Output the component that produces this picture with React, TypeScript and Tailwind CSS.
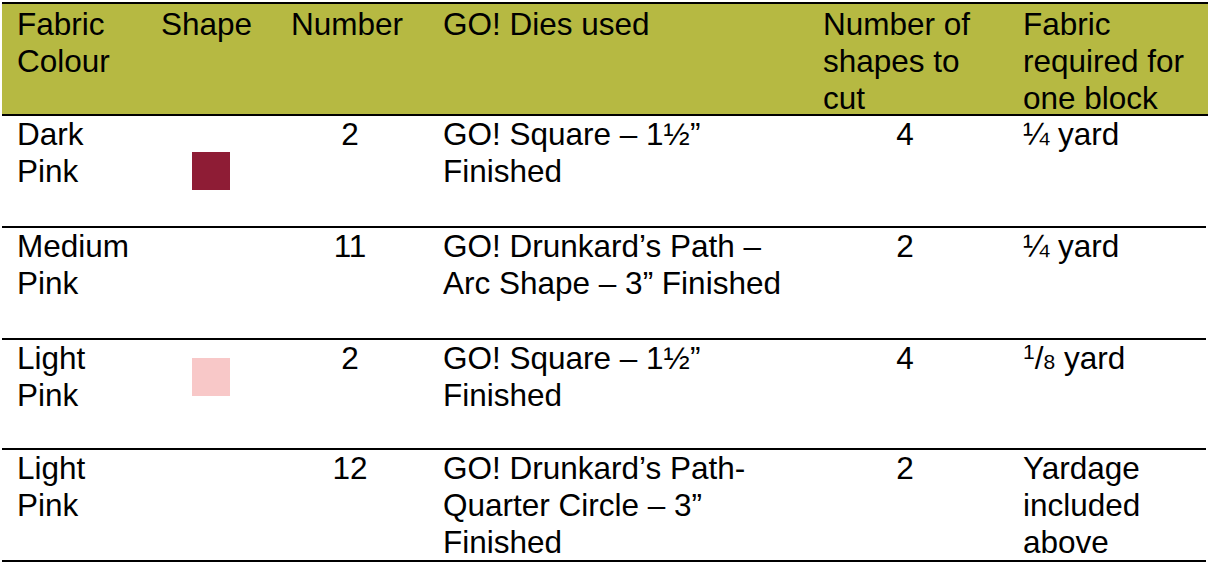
import React from "react";

/* Fabric cutting table for one quilt block */

const COLS = "grid grid-cols-[148px_130px_150px_380px_200px_196px]";

interface Row {
  colour: React.ReactNode;
  swatch?: { bg: string; offset: string };
  number: string;
  dies: React.ReactNode;
  shapes: string;
  fabric: React.ReactNode;
  height: string;
}

const ROWS: Row[] = [
  {
    colour: (
      <>
        Dark
        <br />
        Pink
      </>
    ),
    swatch: { bg: "bg-[#8e1c35]", offset: "mt-[36px]" },
    number: "2",
    dies: (
      <>
        GO! Square – 1½”
        <br />
        Finished
      </>
    ),
    shapes: "4",
    fabric: "¼ yard",
    height: "h-[112px]",
  },
  {
    colour: (
      <>
        Medium
        <br />
        Pink
      </>
    ),
    number: "11",
    dies: (
      <>
        GO! Drunkard’s Path –
        <br />
        Arc Shape – 3” Finished
      </>
    ),
    shapes: "2",
    fabric: "¼ yard",
    height: "h-[112px]",
  },
  {
    colour: (
      <>
        Light
        <br />
        Pink
      </>
    ),
    swatch: { bg: "bg-[#f8c8c8]", offset: "mt-[18px]" },
    number: "2",
    dies: (
      <>
        GO! Square – 1½”
        <br />
        Finished
      </>
    ),
    shapes: "4",
    fabric: (
      <>
        <span className="relative top-[-10px] text-[21px]">1</span>/
        <span className="text-[21px]">8</span> yard
      </>
    ),
    height: "h-[110px]",
  },
  {
    colour: (
      <>
        Light
        <br />
        Pink
      </>
    ),
    number: "12",
    dies: (
      <>
        GO! Drunkard’s Path-
        <br />
        Quarter Circle – 3”
        <br />
        Finished
      </>
    ),
    shapes: "2",
    fabric: (
      <>
        Yardage
        <br />
        included
        <br />
        above
      </>
    ),
    height: "h-[112px]",
  },
];

export default function App() {
  return (
    <div className="w-[1208px] h-[566px] bg-white overflow-hidden pt-[2px]">
      <div
        className="ml-[2px] w-[1204px] text-black text-[31.5px] leading-[37px] whitespace-nowrap"
        style={{ fontFamily: '"Liberation Sans", Arial, sans-serif' }}
      >
        {/* Header */}
        <div className={`${COLS} h-[114px] pt-[2px] bg-[#b6b942] border-t-2 border-b-2 border-black -mr-[4px]`}>
          <div className="pl-[15px]">
            Fabric
            <br />
            Colour
          </div>
          <div className="pl-[11px]">Shape</div>
          <div className="pl-[11px]">Number</div>
          <div className="pl-[13px]">GO! Dies used</div>
          <div className="pl-[13px]">
            Number of
            <br />
            shapes to
            <br />
            cut
          </div>
          <div className="pl-[13px]">
            Fabric
            <br />
            required for
            <br />
            one block
          </div>
        </div>

        {/* Body */}
        {ROWS.map((row, i) => (
          <div key={i} className={`${COLS} ${row.height} border-b-2 border-black`}>
            <div className="pl-[15px]">{row.colour}</div>
            <div className="pl-[42px]">
              {row.swatch && <div className={`w-[38px] h-[38px] ${row.swatch.bg} ${row.swatch.offset}`} />}
            </div>
            <div className="text-center pr-[10px]">{row.number}</div>
            <div className="pl-[13px]">{row.dies}</div>
            <div className="text-center pr-[10px]">{row.shapes}</div>
            <div className="pl-[13px]">{row.fabric}</div>
          </div>
        ))}
      </div>
    </div>
  );
}
